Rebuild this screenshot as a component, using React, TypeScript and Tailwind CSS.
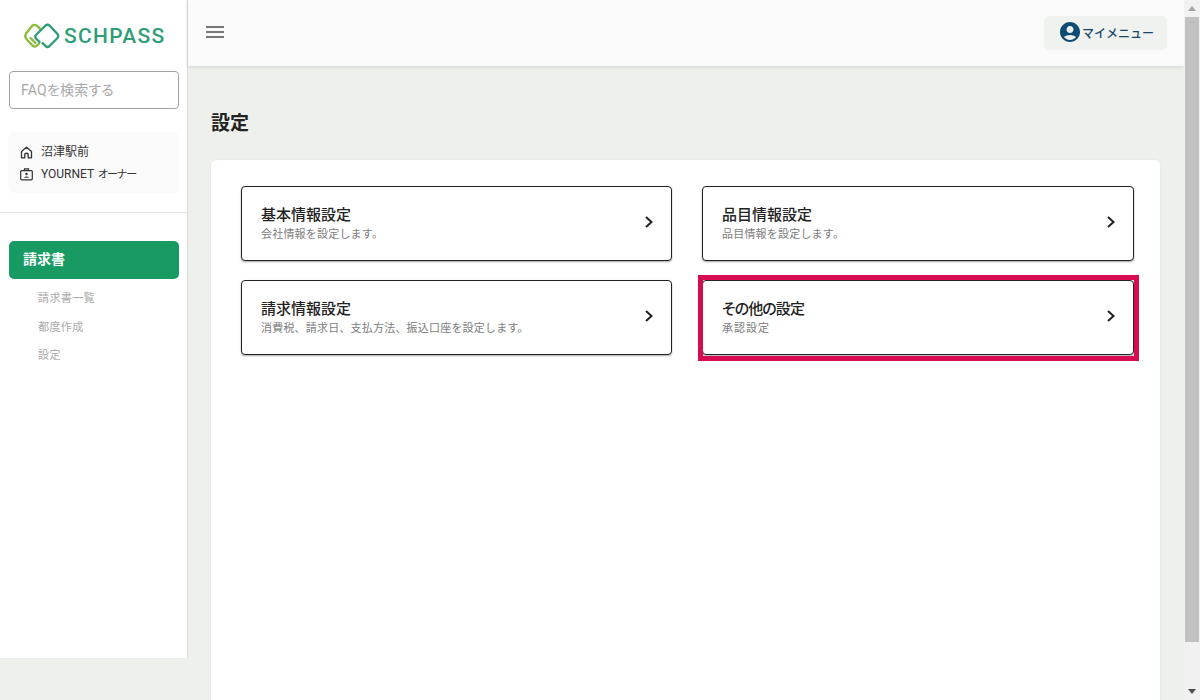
import React from "react";

const font = { fontFamily: 'Roboto, "Noto Sans CJK JP", sans-serif' };

function Logo() {
  return (
    <svg width="36" height="26" viewBox="0 0 36 26" fill="none" strokeWidth="2.4" strokeLinejoin="round" strokeLinecap="round">
      <path d="M15 4.5 L12.5 2.5 Q10.5 1.2 8.5 2.5 L2 10.5 Q0.6 13 2 15.5 L8.5 22.5 Q10.5 24.2 12.5 23 L15 20.5" stroke="#8dbb3c" />
      <path d="M6.5 15 L11.5 20 M15.5 5.5 L16.8 6.8" stroke="#8dbb3c" />
      <path d="M15.5 19 L12 15.5 Q10.6 13.6 12 12 L21.5 2.5 Q23.5 1 25.5 2.5 L33.5 11 Q35 13 33.5 15 L25.5 23 Q23.5 24.8 21.5 23 L18.5 20" stroke="#2f9e77" />
    </svg>
  );
}

function Card({ title, sub, hl }: { title: string; sub: string; hl?: boolean }) {
  return (
    <div className="relative h-[75px] bg-white border border-[#222] rounded-[4px] shadow-[0_1px_2px_rgba(0,0,0,0.35)] pl-[19px] pr-[17px] flex items-center justify-between">
      <div className="flex flex-col">
        <span className={hl ? "text-[15px] leading-[20px] font-medium text-[#222] tracking-[-0.9px]" : "text-[15px] leading-[20px] font-medium text-[#222]"}>{title}</span>
        <span className={hl ? "mt-[1px] text-[11px] leading-[17px] text-[#7c7c7c] [font-feature-settings:normal] tracking-[1px]" : "mt-[1px] text-[11px] leading-[17px] text-[#7c7c7c] [font-feature-settings:normal] tracking-[0.2px]"}>{sub}</span>
      </div>
      <svg width="10" height="14" viewBox="0 0 10 14" fill="none" stroke="#222" strokeWidth="2" className="-mt-[3px]">
        <path d="M2 2 L7.5 7 L2 12" />
      </svg>
      {hl && <div className="absolute -left-[5px] -right-[6px] -top-[6px] -bottom-[7px] border-[5px] border-[#d60b52] pointer-events-none" />}
    </div>
  );
}

export default function App() {
  return (
    <div className="w-[1200px] h-[700px] overflow-hidden flex bg-[#eef0ec] [font-feature-settings:'palt']" style={font}>
      <div className="w-[1184px] flex items-start">
        <aside className="w-[188px] h-[658px] shrink-0 bg-white border-r border-[#d9dbd8] flex flex-col">
          <div className="h-[71px] flex items-center pl-[24px] pt-[1px] gap-[4px]">
            <Logo />
            <span className="text-[21px] font-medium text-[#2f9e77] tracking-[1.3px] leading-none" style={{ fontFamily: 'Roboto, sans-serif' }}>SCHPASS</span>
          </div>
          <div className="ml-[9px] mr-[8px] h-[38px] border border-[#a3a3a3] rounded-[4px] flex items-center pl-[11px] text-[14px] text-[#a8a8a8] tracking-[0.2px]">FAQを検索する</div>
          <div className="mx-[8px] mt-[23px] h-[61px] bg-[#fafafa] rounded-[6px] pl-[12px] pt-[11px] flex flex-col gap-[4px] text-[12px] text-[#333]">
            <div className="flex items-center gap-[8px] h-[18px]">
              <svg width="13" height="13" viewBox="0 0 13 13" fill="none" stroke="#333" strokeWidth="1.3" strokeLinejoin="round">
                <path d="M1.5 5.5 L6.5 1.2 L11.5 5.5 V11.8 H8.2 V8 Q6.5 6.5 4.8 8 V11.8 H1.5 Z" />
              </svg>
              <span>沼津駅前</span>
            </div>
            <div className="flex items-center gap-[8px] h-[18px]">
              <svg width="13" height="13" viewBox="0 0 13 13" fill="none" stroke="#333" strokeWidth="1.2">
                <rect x="0.7" y="2.6" width="11.6" height="9.2" rx="1" />
                <path d="M4.5 2.6 V0.8 H8.5 V2.6" />
                <circle cx="6.5" cy="6" r="1.2" fill="#333" stroke="none" />
                <path d="M3.8 9.8 Q6.5 7.4 9.2 9.8 Z" fill="#333" stroke="none" />
              </svg>
              <span>YOURNET <span className="text-[11px] tracking-[-1px] ml-[1px]">オーナー</span></span>
            </div>
          </div>
          <div className="mt-[19px] border-t border-[#e6e6e6]" />
          <div className="ml-[9px] mr-[8px] mt-[28px] h-[38px] bg-[#189b62] rounded-[5px] flex items-center pl-[14px] pb-[2px] text-[14px] font-bold text-white">請求書</div>
          <nav className="mt-[6px] pl-[38px] flex flex-col text-[11px] text-[#aaa] tracking-[0.4px] [font-feature-settings:normal]">
            <span className="h-[28.5px] flex items-center">請求書一覧</span>
            <span className="h-[28.5px] flex items-center">都度作成</span>
            <span className="h-[28.5px] flex items-center">設定</span>
          </nav>
        </aside>
        <div className="flex-1 h-[700px] flex flex-col">
          <header className="h-[66px] shrink-0 bg-[#fafafa] shadow-[0_1px_4px_rgba(0,0,0,0.12)] flex items-center justify-between pl-[17px] pr-[17px]">
            <svg width="20" height="14" viewBox="0 0 20 14" fill="#777" className="-mt-[2px]">
              <rect x="1" y="1" width="18" height="2" />
              <rect x="1" y="6" width="18" height="2" />
              <rect x="1" y="11" width="18" height="2" />
            </svg>
            <div className="w-[123px] h-[34px] bg-[#f0f2ef] rounded-[5px] flex items-center pl-[14px] text-[12px] font-medium text-[#17486b] [font-feature-settings:normal]">
              <svg width="24" height="24" viewBox="0 0 24 24" fill="#0f4c75" className="-mt-[2px] shrink-0">
                <path d="M12 2C6.48 2 2 6.48 2 12s4.48 10 10 10 10-4.48 10-10S17.52 2 12 2zm0 4c1.93 0 3.5 1.57 3.5 3.5S13.93 13 12 13s-3.5-1.57-3.5-3.5S10.07 6 12 6zm0 14c-2.03 0-4.43-.82-6.14-2.88C7.55 15.8 9.68 15 12 15s4.45.8 6.14 2.12C16.43 19.18 14.03 20 12 20z" />
              </svg>
              <span className="pt-[1px] whitespace-nowrap">マイメニュー</span>
            </div>
          </header>
          <main className="flex-1 pl-[23px] pr-[24px] min-h-0">
            <h1 className="mt-[46px] text-[19px] leading-[24px] font-bold text-[#222]">設定</h1>
            <section className="mt-[24px] h-[600px] bg-white rounded-[5px] shadow-[0_0_2px_rgba(0,0,0,0.08)] pl-[30px] pr-[26px] pt-[26px]">
              <div className="grid grid-cols-[431px_432px] gap-x-[30px] gap-y-[19px]">
                <Card title="基本情報設定" sub="会社情報を設定します。" />
                <Card title="品目情報設定" sub="品目情報を設定します。" />
                <Card title="請求情報設定" sub="消費税、請求日、支払方法、振込口座を設定します。" />
                <Card title="その他の設定" sub="承認設定" hl />
              </div>
            </section>
          </main>
        </div>
      </div>
      <div className="w-[16px] h-[700px] bg-[#f1f1f1] flex flex-col items-center shrink-0">
        <div className="h-[17px] flex items-center justify-center">
          <div className="w-0 h-0 border-x-[4px] border-x-transparent border-b-[5px] border-b-[#a3a3a3]" />
        </div>
        <div className="w-[14px] h-[625px] bg-[#c1c1c1]" />
        <div className="flex-1 flex items-end pb-[6px]">
          <div className="w-0 h-0 border-x-[4px] border-x-transparent border-t-[5px] border-t-[#505050]" />
        </div>
      </div>
    </div>
  );
}
